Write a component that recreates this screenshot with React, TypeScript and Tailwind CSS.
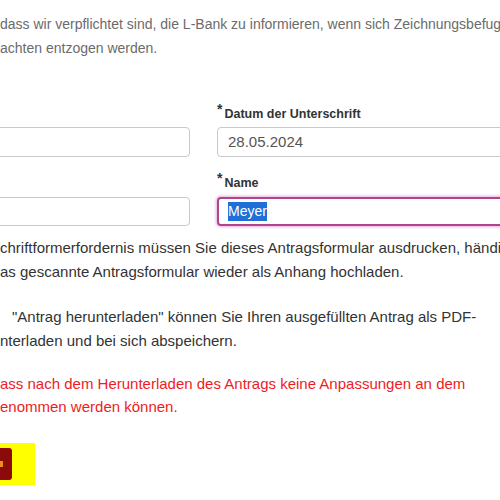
export default function App() {
  const font = { fontFamily: '"Liberation Sans", Arial, sans-serif' };
  return (
    <div className="w-[500px] h-[500px] overflow-hidden bg-white" style={font}>
      <div className="pt-[12px] text-[14px] leading-[24px] text-[#6b6b6b] whitespace-nowrap">
        <div>dass wir verpflichtet sind, die L-Bank zu informieren, wenn sich Zeichnungsbefugnisse</div>
        <div>achten entzogen werden.</div>
      </div>

      <div className="mt-[44px] flex gap-[27px]">
        <div className="w-[200px] shrink-0 -ml-[10px] flex flex-col">
          <div className="h-[18px] mb-[5px]" />
          <div className="h-[30px] rounded-[4px] border-[1.5px] border-[#c9c9c9] bg-white" />
          <div className="h-[18px] mt-[16px] mb-[6px]" />
          <div className="h-[29px] rounded-[4px] border-[1.5px] border-[#c9c9c9] bg-white" />
        </div>
        <div className="w-[320px] shrink-0 flex flex-col">
          <label className="h-[18px] mb-[5px] flex items-start text-[12.5px] font-bold text-[#333] whitespace-nowrap">
            <span className="text-[14px] leading-[10px] mr-[2px]">*</span>
            <span className="leading-[18px] pt-[1px]">Datum der Unterschrift</span>
          </label>
          <div className="h-[30px] rounded-[4px] border-[1.5px] border-[#c9c9c9] bg-white flex items-center pl-[10px] text-[15px] text-[#555]">
            28.05.2024
          </div>
          <label className="h-[18px] mt-[16px] mb-[6px] flex items-start text-[12.5px] font-bold text-[#333] whitespace-nowrap">
            <span className="text-[14px] leading-[10px] mr-[2px]">*</span>
            <span className="leading-[18px] pt-[1px]">Name</span>
          </label>
          <div className="h-[29px] rounded-[4px] border-2 border-[#b0458f] shadow-[0_0_3px_1px_rgba(214,120,200,0.6)] bg-white flex items-center pl-[9px] text-[14px]">
            <span className="bg-[#1f6fd6] text-white leading-[19px]">Meyer</span>
          </div>
        </div>
      </div>

      <div className="mt-[10px] text-[15px] leading-[24px] text-[#333] whitespace-nowrap">
        <div>chriftformerfordernis müssen Sie dieses Antragsformular ausdrucken, händisch</div>
        <div>as gescannte Antragsformular wieder als Anhang hochladen.</div>
      </div>

      <div className="mt-[21px] text-[15px] leading-[24px] text-[#333] whitespace-nowrap pl-[12px]">
        <div>"Antrag herunterladen" können Sie Ihren ausgefüllten Antrag als PDF-</div>
        <div className="-ml-[12px]">nterladen und bei sich abspeichern.</div>
      </div>

      <div className="mt-[19px] text-[15px] leading-[23px] text-[#ee1c25] whitespace-nowrap">
        <div>ass nach dem Herunterladen des Antrags keine Anpassungen an dem</div>
        <div>enommen werden können.</div>
      </div>

      <div className="mt-[25px] w-[35px] h-[42px] bg-[#ffff00] flex items-center">
        <button className="h-[32px] w-[12px] bg-[#8b0b0b] rounded-r-[3px] flex items-center overflow-hidden">
          <span className="w-[3px] h-[6px] bg-[#e8901a]" />
        </button>
      </div>
    </div>
  );
}
